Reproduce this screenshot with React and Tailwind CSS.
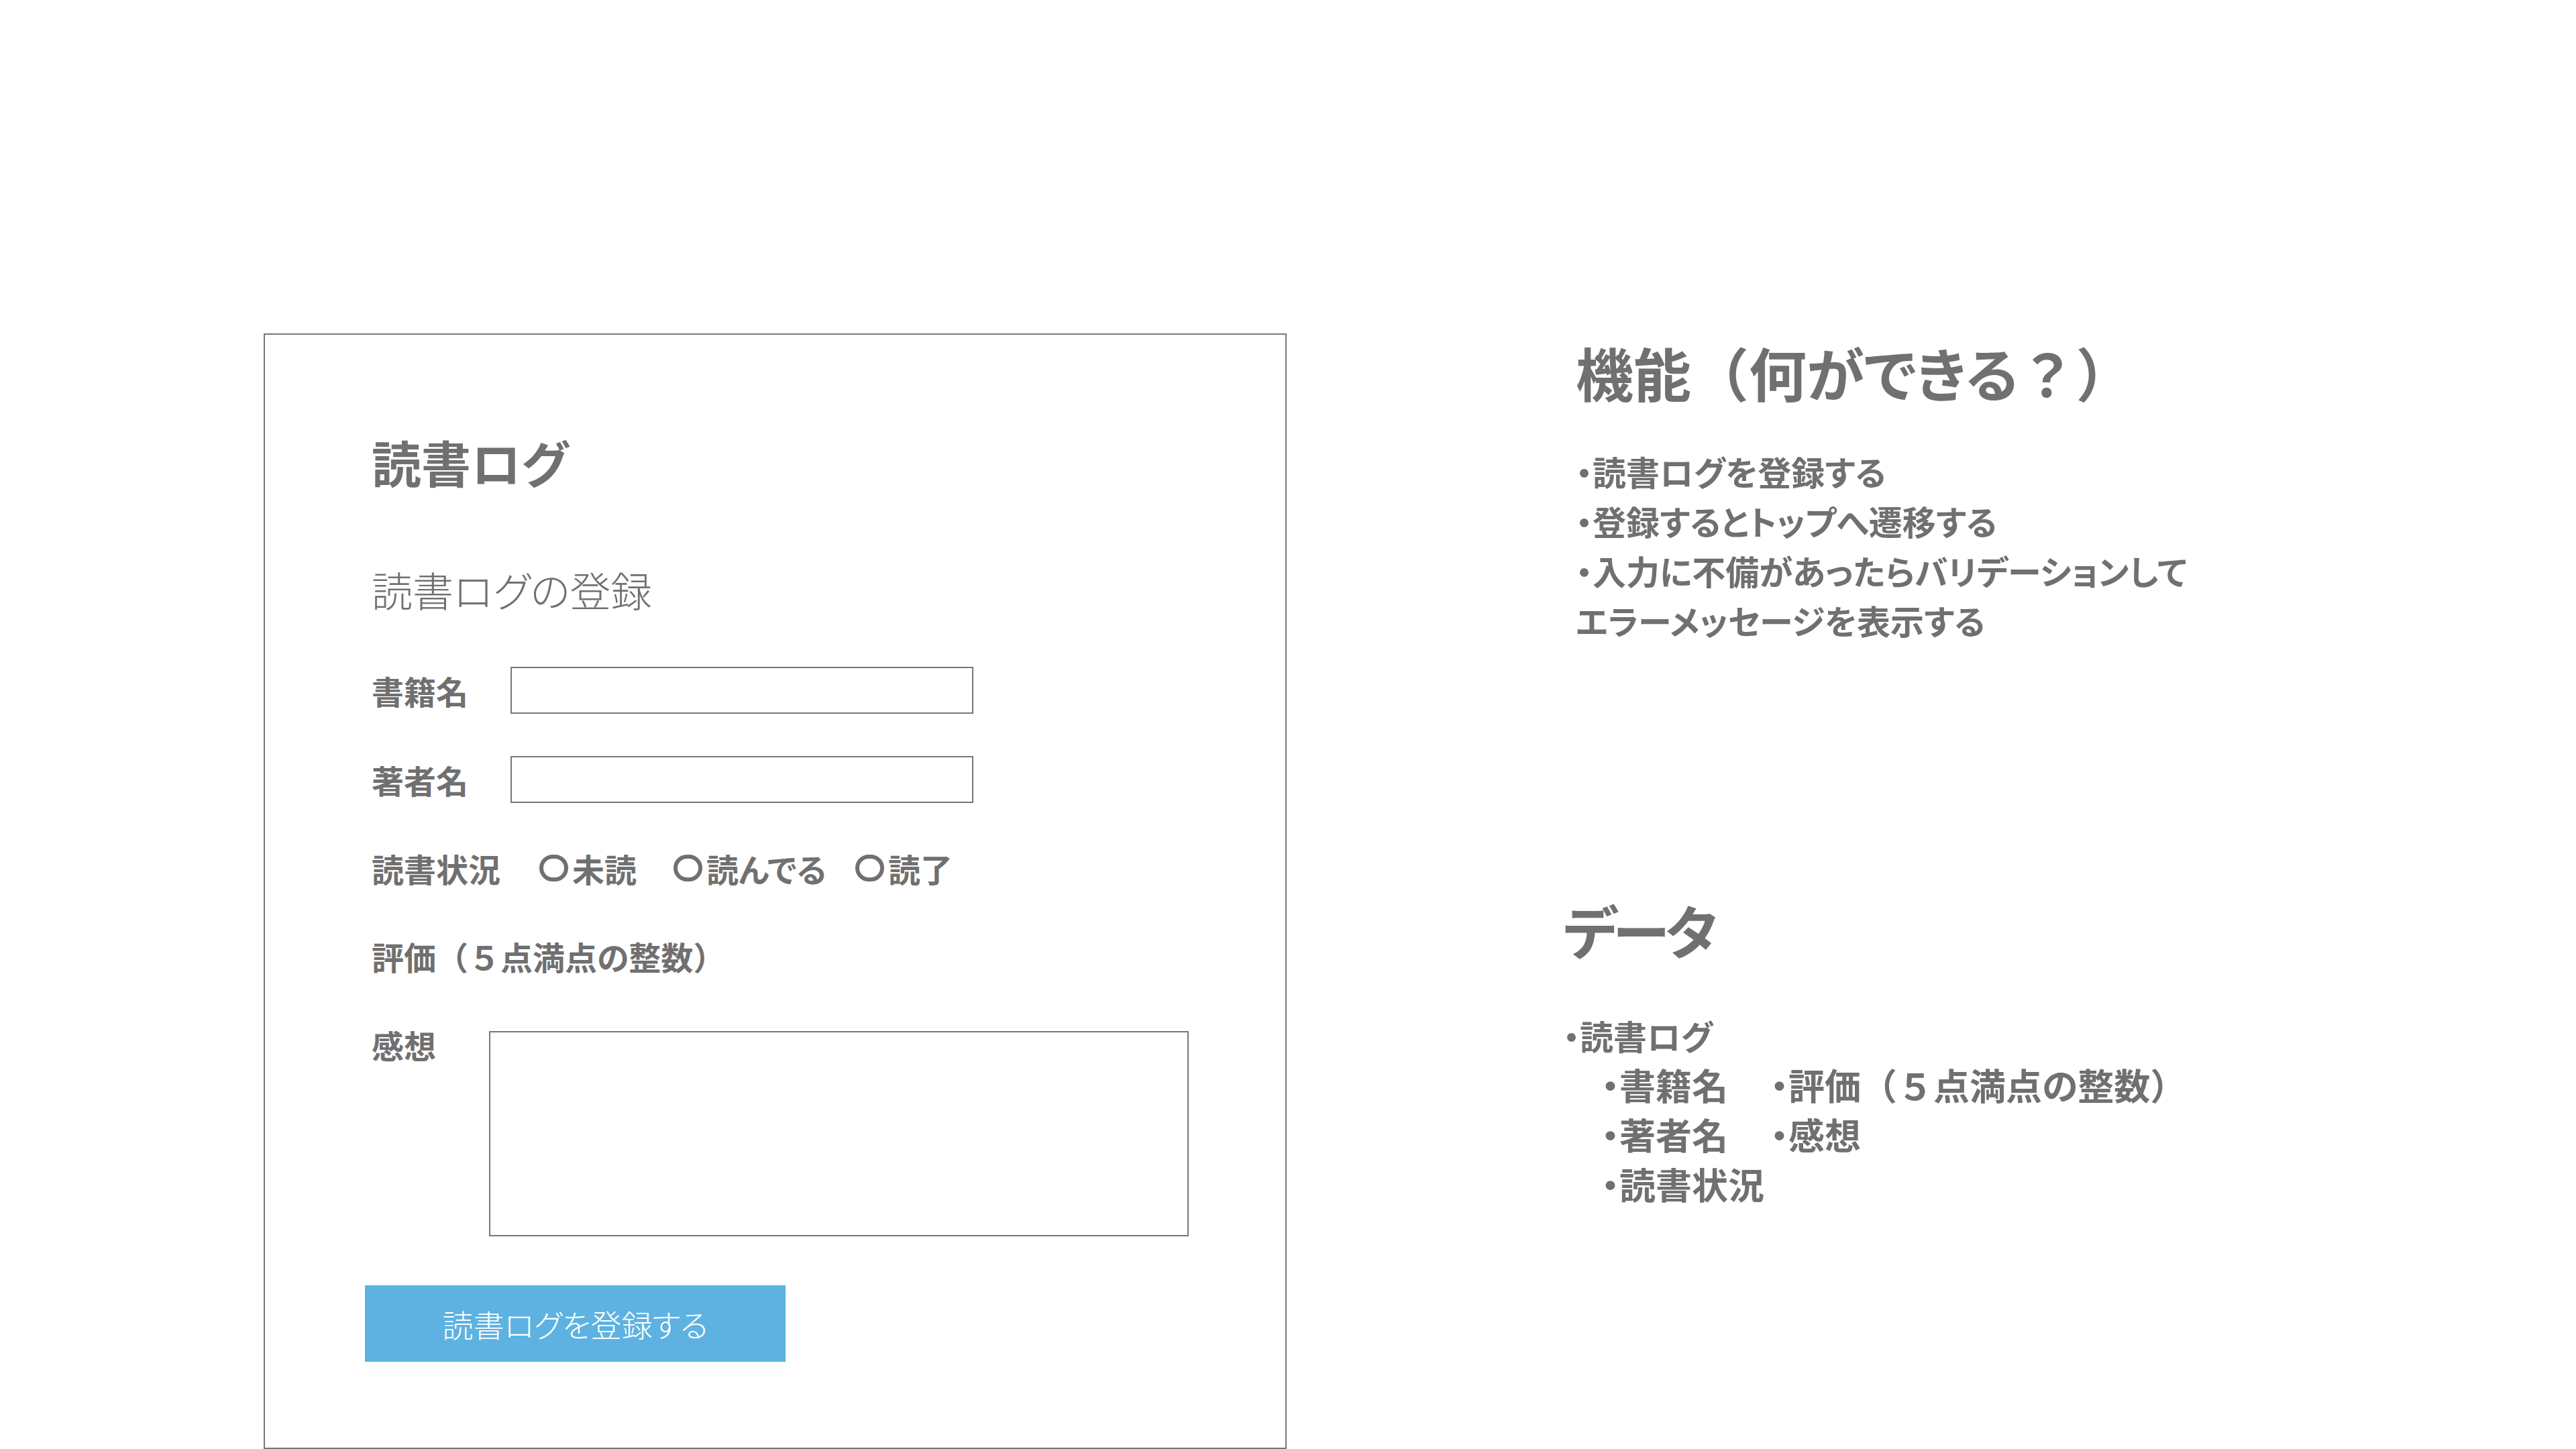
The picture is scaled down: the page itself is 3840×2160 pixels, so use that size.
import { useState } from 'react'

const font = "font-['Noto_Sans_CJK_JP',sans-serif] [font-feature-settings:'palt']"

// full-width punctuation keeps its em box
const Wide = ({ children }) => <span className="[font-feature-settings:normal]">{children}</span>

function Radio({ label, checked, onClick, className }) {
  return (
    <button type="button" onClick={onClick} className={`flex items-center gap-[6px] ${className}`}>
      <span className="w-[43px] h-[40px] rounded-full border-[6px] border-[#707070] flex items-center justify-center">
        {checked && <span className="w-[16px] h-[16px] rounded-full bg-[#707070]" />}
      </span>
      <span>{label}</span>
    </button>
  )
}

export default function App() {
  const [title, setTitle] = useState("")
  const [author, setAuthor] = useState("")
  const [status, setStatus] = useState(null)
  const [memo, setMemo] = useState("")

  return (
    <main className={`w-[3840px] h-[2160px] bg-white flex text-[#707070] overflow-hidden ${font}`}>
      {/* form panel */}
      <section className="ml-[393px] mt-[497px] w-[1525px] h-[1663px] border-2 border-[#777777] pt-[139px] pl-[159px] flex flex-col items-start">
        <h1 className="text-[74px] leading-[100px] font-bold">読書ログ</h1>
        <h2 className="mt-[101px] text-[61px] leading-[80px] font-light">読書ログの登録</h2>

        <div className="mt-[75px] h-[70px] flex items-center text-[48px] font-bold">
          <label className="w-[207px]">書籍名</label>
          <input
            type="text"
            className="w-[690px] h-[70px] border-2 border-[#777777] bg-white outline-none px-3 text-[40px] font-normal"
            value={title}
            onChange={(e) => setTitle(e.target.value)}
          />
        </div>

        <div className="mt-[63px] h-[70px] flex items-center text-[48px] font-bold">
          <label className="w-[207px]">著者名</label>
          <input
            type="text"
            className="w-[690px] h-[70px] border-2 border-[#777777] bg-white outline-none px-3 text-[40px] font-normal"
            value={author}
            onChange={(e) => setAuthor(e.target.value)}
          />
        </div>

        <div className="mt-[67px] h-[60px] flex items-center text-[48px] font-bold">
          <span className="w-[250px]">読書状況</span>
          <Radio className="w-[200px]" label="未読" checked={status === 0} onClick={() => setStatus(0)} />
          <Radio className="w-[271px]" label="読んでる" checked={status === 1} onClick={() => setStatus(1)} />
          <Radio label="読了" checked={status === 2} onClick={() => setStatus(2)} />
        </div>

        <div className="mt-[71px] h-[60px] flex items-center text-[48px] font-bold">
          <span>評価<Wide>（５</Wide>点満点の整数<Wide>）</Wide></span>
        </div>

        <div className="mt-[82px] flex items-start text-[48px] font-bold">
          <label className="w-[175px] leading-[40px]">感想</label>
          <textarea
            className="w-[1043px] h-[306px] border-2 border-[#777777] bg-white outline-none resize-none p-3 text-[40px] font-normal"
            value={memo}
            onChange={(e) => setMemo(e.target.value)}
          />
        </div>

        <button
          type="button"
          className="mt-[73px] -ml-[10px] w-[627px] h-[114px] bg-[#5db2e1] text-white text-[46px] font-light"
        >
          読書ログを登録する
        </button>
      </section>

      {/* notes */}
      <div className="ml-[412px] pt-[500px] flex flex-col">
        <h2 className="pl-[19px] text-[86px] leading-[110px] font-bold">
          機能<Wide>（</Wide>何ができる<Wide>？）</Wide>
        </h2>
        <div className="mt-[55px] pl-[19px] text-[50px] leading-[74px] font-bold">
          <p>・読書ログを登録する</p>
          <p>・登録するとトップへ遷移する</p>
          <p>・入力に不備があったらバリデーションして</p>
          <p>エラーメッセージを表示する</p>
        </div>

        <h2 className="mt-[370px] text-[86px] leading-[110px] font-bold tracking-[-6px]">データ</h2>
        <div className="mt-[65px] text-[50px] leading-[74px] font-bold">
          <p>・読書ログ</p>
          <div className="pl-[57px] grid grid-cols-[252px_auto] text-[54px]">
            <p>・書籍名</p>
            <p>・評価<Wide>（５</Wide>点満点の整数<Wide>）</Wide></p>
            <p>・著者名</p>
            <p>・感想</p>
            <p>・読書状況</p>
          </div>
        </div>
      </div>
    </main>
  )
}
